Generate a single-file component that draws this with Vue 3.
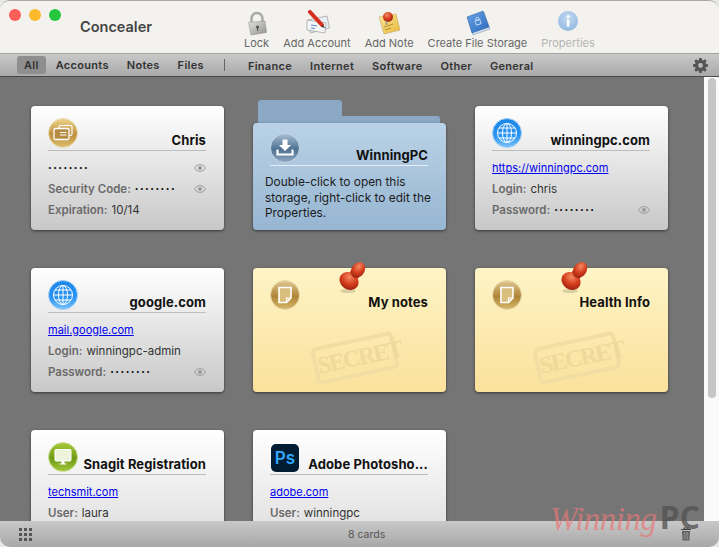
<script setup>
const tools = [
  { key: 'lock', label: 'Lock' },
  { key: 'account', label: 'Add Account' },
  { key: 'note', label: 'Add Note' },
  { key: 'storage', label: 'Create File Storage' },
  { key: 'info', label: 'Properties', off: true }
]

const leftTabs = ['All', 'Accounts', 'Notes', 'Files']
const rightTabs = ['Finance', 'Internet', 'Software', 'Other', 'General']

const dots = '••••••••'

const cards = [
  {
    kind: 'plain', icon: 'card', title: 'Chris',
    rows: [
      { value: dots, secret: true, eye: true },
      { label: 'Security Code:', value: dots, secret: true, eye: true },
      { label: 'Expiration:', value: '10/14' }
    ]
  },
  {
    kind: 'folder', icon: 'download', title: 'WinningPC',
    text: 'Double-click to open this storage, right-click to edit the Properties.'
  },
  {
    kind: 'plain', icon: 'globe', title: 'winningpc.com',
    rows: [
      { link: 'https://winningpc.com' },
      { label: 'Login:', value: 'chris' },
      { label: 'Password:', value: dots, secret: true, eye: true }
    ]
  },
  {
    kind: 'plain', icon: 'globe', title: 'google.com',
    rows: [
      { link: 'mail.google.com' },
      { label: 'Login:', value: 'winningpc-admin' },
      { label: 'Password:', value: dots, secret: true, eye: true }
    ]
  },
  { kind: 'sticky', icon: 'page', title: 'My notes' },
  { kind: 'sticky', icon: 'page', title: 'Health Info' },
  {
    kind: 'plain', icon: 'monitor', title: 'Snagit Registration',
    rows: [
      { link: 'techsmit.com' },
      { label: 'User:', value: 'laura' }
    ]
  },
  {
    kind: 'plain', icon: 'ps', title: 'Adobe Photosho...',
    rows: [
      { link: 'adobe.com' },
      { label: 'User:', value: 'winningpc' }
    ]
  }
]
</script>

<template>
  <div class="window">
    <svg class="defs" width="0" height="0">
      <defs>
        <linearGradient id="gold" x1="0" y1="0" x2="0" y2="1">
          <stop offset="0" stop-color="#efd48c" />
          <stop offset="0.55" stop-color="#bd8f3e" />
          <stop offset="1" stop-color="#e0c06e" />
        </linearGradient>
        <linearGradient id="bronze" x1="0" y1="0" x2="0" y2="1">
          <stop offset="0" stop-color="#e2c992" />
          <stop offset="0.55" stop-color="#ae8436" />
          <stop offset="1" stop-color="#d8b96c" />
        </linearGradient>
        <linearGradient id="slate" x1="0" y1="0" x2="0" y2="1">
          <stop offset="0" stop-color="#a9bfd4" />
          <stop offset="0.55" stop-color="#4d7193" />
          <stop offset="1" stop-color="#8fa9c3" />
        </linearGradient>
        <linearGradient id="sky" x1="0" y1="0" x2="0" y2="1">
          <stop offset="0" stop-color="#1b86ea" />
          <stop offset="0.6" stop-color="#2a94f2" />
          <stop offset="1" stop-color="#7cc3fa" />
        </linearGradient>
        <linearGradient id="leaf" x1="0" y1="0" x2="0" y2="1">
          <stop offset="0" stop-color="#a9cb3c" />
          <stop offset="0.55" stop-color="#6f9a14" />
          <stop offset="1" stop-color="#a4c83e" />
        </linearGradient>
        <linearGradient id="steel" x1="0" y1="0" x2="1" y2="1">
          <stop offset="0" stop-color="#e4e4e2" />
          <stop offset="1" stop-color="#8f8f8c" />
        </linearGradient>
        <radialGradient id="red" cx="0.4" cy="0.3" r="0.8">
          <stop offset="0" stop-color="#f48a62" />
          <stop offset="0.5" stop-color="#d63e1e" />
          <stop offset="1" stop-color="#8e1c0c" />
        </radialGradient>
        <linearGradient id="paper" x1="0" y1="0" x2="1" y2="1">
          <stop offset="0" stop-color="#fbe79a" />
          <stop offset="1" stop-color="#e9b93a" />
        </linearGradient>
        <linearGradient id="book" x1="0" y1="0" x2="1" y2="1">
          <stop offset="0" stop-color="#6aa6e6" />
          <stop offset="1" stop-color="#2a68bd" />
        </linearGradient>
        <radialGradient id="bubble" cx="0.5" cy="0.35" r="0.7">
          <stop offset="0" stop-color="#c4daf0" />
          <stop offset="1" stop-color="#8fb6e0" />
        </radialGradient>
      </defs>
    </svg>

    <header class="toolbar">
      <div class="lights">
        <span class="light red"></span>
        <span class="light yellow"></span>
        <span class="light green"></span>
      </div>
      <div class="app-title">Concealer</div>
      <div class="tools">
        <div v-for="t in tools" :key="t.key" class="tool" :class="{ off: t.off }">
          <svg class="tool-icon" viewBox="0 0 28 26" width="28" height="26">
            <g v-if="t.key === 'lock'">
              <path d="M8.500 12V8.500a5.500 5.500 0 0 1 11 0V12" fill="none" stroke="#a9a9a6" stroke-width="2.400" />
              <path d="M5.500 12.500 22 11l1.500 11.500L8 25z" fill="url(#steel)" stroke="#8a8a88" stroke-width="0.500" />
              <circle cx="14.500" cy="17" r="1.600" fill="#555" />
              <rect x="14" y="17" width="1.200" height="4" fill="#555" />
            </g>
            <g v-else-if="t.key === 'account'">
              <path d="M5 10 24 6l2.500 12-19 5z" fill="#e8eef4" stroke="#8e8e8e" stroke-width="0.600" />
              <path d="M4 10 23 13l-1 10-18-3z" fill="#f4f5f6" stroke="#8e8e8e" stroke-width="0.600" />
              <path d="M8 15l6 1M8 18l4 .6" stroke="#5c8cd0" stroke-width="1" />
              <path d="M7 2 19 15" stroke="#d62f1f" stroke-width="4" stroke-linecap="round" />
              <path d="M19.500 15l3 3-4-1z" fill="#333" />
            </g>
            <g v-else-if="t.key === 'note'">
              <path d="M4 7 21 4l4 16-16 4z" fill="url(#paper)" stroke="#b8a05a" stroke-width="0.500" />
              <path d="M9 17l9-3M10 20l6-2" stroke="#a8862c" stroke-width="0.900" />
              <circle cx="13" cy="7" r="5" fill="url(#red)" />
              <path d="M12 11l-1 4" stroke="#8a8a8a" stroke-width="1.200" />
            </g>
            <g v-else-if="t.key === 'storage'">
              <path d="M5 8 21 2l6 17-17 6z" fill="#d8e2ec" stroke="#6f8fb4" stroke-width="0.500" />
              <path d="M4 7 20 1l6 16-17 6z" fill="url(#book)" stroke="#2a5ca0" stroke-width="0.500" />
              <rect x="12.500" y="10" width="5" height="4.500" rx="0.700" transform="rotate(-20 15 12)" fill="none" stroke="#bcd8f4" stroke-width="1" />
              <circle cx="14.500" cy="9" r="1.700" fill="none" stroke="#bcd8f4" stroke-width="1" />
            </g>
            <g v-else>
              <circle cx="14" cy="11" r="10" fill="url(#bubble)" />
              <rect x="12.800" y="9.500" width="2.600" height="7" rx="0.400" fill="#fff" />
              <circle cx="14.100" cy="6.500" r="1.600" fill="#fff" />
            </g>
          </svg>
          <span class="tool-label">{{ t.label }}</span>
        </div>
      </div>
    </header>

    <nav class="tabbar">
      <span
        v-for="(tab, i) in leftTabs"
        :key="tab"
        class="tab"
        :class="{ active: i === 0 }"
      >{{ tab }}</span>
      <span class="sep"></span>
      <span v-for="tab in rightTabs" :key="tab" class="tab group">{{ tab }}</span>
      <svg class="gear" viewBox="0 0 16 16" width="15" height="15">
        <path
          fill="#555"
          fill-rule="evenodd"
          d="M6.700 0h2.600l.4 2.200 1.200.5L12.800 1.400l1.800 1.800-1.300 1.900.5 1.200 2.200.4v2.600l-2.200.4-.5 1.200 1.300 1.900-1.800 1.800-1.900-1.300-1.200.5-.4 2.200H6.700l-.4-2.200-1.200-.5-1.900 1.300-1.800-1.800 1.300-1.900-.5-1.200L0 9.300V6.700l2.200-.4.500-1.200-1.300-1.900 1.800-1.800 1.900 1.300 1.200-.5zM8 5.400a2.600 2.600 0 1 0 0 5.200 2.600 2.600 0 0 0 0-5.200z"
        />
      </svg>
    </nav>

    <main class="content">
      <div class="cards">
        <article v-for="c in cards" :key="c.title" class="card" :class="c.kind">
          <div class="head">
            <svg v-if="c.icon !== 'ps'" class="badge" viewBox="0 0 30 30" width="30" height="30">
              <g v-if="c.icon === 'card'">
                <circle cx="15" cy="15" r="14.500" fill="url(#gold)" stroke="#e9dcb8" />
                <rect x="11" y="7.500" width="13" height="10" rx="1.500" fill="none" stroke="#fff" stroke-width="1.200" />
                <rect x="6" y="10.500" width="15" height="11" rx="1.500" fill="#b68c44" stroke="#fff" stroke-width="1.300" />
                <path d="M12 14.500h6.500M12 17h6.500" stroke="#fff" stroke-width="1" />
              </g>
              <g v-else-if="c.icon === 'download'">
                <circle cx="15" cy="15" r="14.500" fill="url(#slate)" stroke="#c6d6e4" />
                <path d="M12.500 6.500h5V12h3.500L15 18l-6-6h3.500z" fill="#fff" />
                <path d="M7.500 16.500v5h15v-5" fill="none" stroke="#fff" stroke-width="2.200" />
              </g>
              <g v-else-if="c.icon === 'globe'">
                <circle cx="15" cy="15" r="14.500" fill="url(#sky)" stroke="#a6d2f6" />
                <g fill="none" stroke="#fff" stroke-width="1">
                  <circle cx="15" cy="15" r="9.500" />
                  <ellipse cx="15" cy="15" rx="4.500" ry="9.500" />
                  <path d="M15 5.500v19M5.500 15h19M7 10h16M7 20h16" />
                </g>
              </g>
              <g v-else-if="c.icon === 'page'">
                <circle cx="15" cy="15" r="14.500" fill="url(#bronze)" stroke="#ead9ae" />
                <path d="M9 7.500h12v10.500l-4.500 4.500H9z" fill="#d9bd7c" stroke="#fff" stroke-width="1.600" />
                <path d="M21 18h-4.500v4.500" fill="none" stroke="#fff" stroke-width="1.200" />
              </g>
              <g v-else>
                <circle cx="15" cy="15" r="14.500" fill="url(#leaf)" stroke="#cfe09a" />
                <rect x="7" y="7.500" width="16" height="11.500" rx="1" fill="#eef4dc" stroke="#fff" />
                <path d="M13.500 19h3v2.500h2v1h-7v-1h2z" fill="#fff" />
              </g>
            </svg>
            <span v-else class="ps-logo">Ps</span>
            <h2 class="title">{{ c.title }}</h2>
          </div>

          <p v-if="c.text" class="desc">{{ c.text }}</p>

          <div v-for="(r, i) in c.rows" :key="i" class="row">
            <a v-if="r.link" class="link" href="#">{{ r.link }}</a>
            <template v-else>
              <span v-if="r.label" class="label">{{ r.label }}</span>
              <span class="value" :class="{ secret: r.secret }">{{ r.value }}</span>
              <svg v-if="r.eye" class="eye" viewBox="0 0 12 8" width="12" height="8">
                <path d="M.5 4C2 1.600 4 .6 6 .6S10 1.600 11.500 4C10 6.400 8 7.400 6 7.400S2 6.400.5 4z" fill="none" stroke="#9a9a9a" />
                <circle cx="6" cy="4" r="2" fill="#9a9a9a" />
              </svg>
            </template>
          </div>

          <template v-if="c.kind === 'sticky'">
            <svg class="pin" viewBox="0 0 28 32" width="28" height="32">
              <ellipse cx="10" cy="30" rx="8" ry="2" fill="#000" opacity="0.14" />
              <path d="M14 8 23 13 15 24 8 17z" fill="#b52c14" />
              <ellipse cx="11" cy="20" rx="10" ry="8.500" transform="rotate(35 11 20)" fill="url(#red)" />
              <ellipse cx="20" cy="9" rx="6.500" ry="8.500" transform="rotate(35 20 9)" fill="url(#red)" />
            </svg>
            <div class="stamp">SECRET</div>
          </template>
        </article>
      </div>
      <div class="scrollbar"><div class="thumb"></div></div>
    </main>

    <footer class="statusbar">
      <svg class="grip" viewBox="0 0 14 13" width="14" height="13">
        <g fill="#555">
          <rect x="0" y="0" width="3" height="3" /><rect x="5" y="0" width="3" height="3" /><rect x="10" y="0" width="3" height="3" />
          <rect x="0" y="5" width="3" height="3" /><rect x="5" y="5" width="3" height="3" /><rect x="10" y="5" width="3" height="3" />
          <rect x="0" y="10" width="3" height="3" /><rect x="5" y="10" width="3" height="3" /><rect x="10" y="10" width="3" height="3" />
        </g>
      </svg>
      <span class="count">8 cards</span>
      <svg class="trash" viewBox="0 0 12 14" width="12" height="14">
        <path d="M1 2.500h10M4 2.500V1h4v1.500" fill="none" stroke="#444" stroke-width="1.200" />
        <path d="M2 4h8l-.7 9.500H2.700z" fill="#5a5a5a" />
        <path d="M4.200 5v7.500M6 5v7.500M7.800 5v7.500" stroke="#b0b0b0" stroke-width="0.700" />
      </svg>
    </footer>

    <div class="watermark">
      <span class="wm-script">Winning</span><span class="wm-pc">PC</span>
    </div>
  </div>
</template>

<style scoped>
.window {
  position: relative;
  display: flex;
  flex-direction: column;
  height: 547px;
  overflow: hidden;
  border-radius: 10px;
  border-top: 1px solid #a8a8a8;
  box-sizing: border-box;
  font-family: Inter, "Liberation Sans", sans-serif;
}
.defs {
  position: absolute;
}
.toolbar {
  display: flex;
  flex: none;
  height: 52px;
  background: #f3f2ee;
  border-bottom: 1px solid #a4a4a4;
}
.lights {
  display: flex;
  gap: 8px;
  padding: 8px 0 0 9px;
}
.light {
  width: 12px;
  height: 12px;
  border-radius: 50%;
}
.red { background: #fb5f58; }
.yellow { background: #fdb92c; }
.green { background: #27c63f; }
.app-title {
  margin: 17px 0 0 19px;
  width: 164px;
  font-size: 14.500px;
  font-weight: 600;
  color: #444;
}
.tools {
  display: flex;
  gap: 14px;
}
.tool {
  display: flex;
  flex-direction: column;
  align-items: center;
  padding-top: 9px;
}
.tool-icon {
  height: 26px;
  margin: 0 -2px;
}
.tool-label {
  margin-top: 1px;
  font-size: 11px;
  line-height: 13px;
  color: #666;
  white-space: nowrap;
}
.tool.off .tool-label {
  color: #b5b5b5;
}
.tabbar {
  display: flex;
  flex: none;
  align-items: center;
  height: 23px;
  box-sizing: border-box;
  padding-left: 17px;
  background: linear-gradient(#c9c9c9, #a9a9a9);
  border-bottom: 1px solid #484848;
}
.tab {
  margin-right: 18px;
  font-size: 11px;
  font-weight: 600;
  letter-spacing: 0.300px;
  color: #333;
  white-space: nowrap;
}
.tab.active {
  margin-right: 10px;
  padding: 2px 7px;
  border-radius: 3px;
  background: #8e8e8e;
}
.tab.group {
  position: relative;
  top: 1px;
}
.sep {
  width: 1px;
  height: 12px;
  margin: 0 23px 0 2px;
  background: #666;
}
.gear {
  margin-left: auto;
  margin-right: 11px;
}
.content {
  display: flex;
  flex: 1;
  min-height: 0;
  background: #757575;
}
.cards {
  position: relative;
  z-index: 0;
  display: grid;
  flex: 1;
  grid-template-columns: repeat(3, 193px);
  grid-auto-rows: 124px;
  column-gap: 29px;
  row-gap: 38px;
  padding: 29px 0 0 31px;
  overflow: hidden;
}
.card {
  position: relative;
  box-sizing: border-box;
  padding: 12px 18px 0 17px;
  border-radius: 4px;
  box-shadow: 0 1px 3px rgba(0, 0, 0, 0.55);
  background: linear-gradient(#ffffff, #c8c8c8);
}
.card.plain:nth-child(n + 7) {
  background: linear-gradient(#ffffff, #e4e4e4 90px);
}
.head {
  display: flex;
  align-items: flex-end;
  justify-content: space-between;
  height: 32px;
  border-bottom: 1px solid #bdbdbd;
}
.badge,
.ps-logo {
  flex: none;
  margin-bottom: 2px;
}
.ps-logo {
  width: 28px;
  height: 28px;
  margin-left: 1px;
  border-radius: 5px;
  background: #011d33;
  color: #31a8ff;
  font-size: 17px;
  font-weight: 600;
  line-height: 28px;
  text-align: center;
}
.title {
  margin: 0 0 2px;
  font-size: 13px;
  font-weight: 700;
  letter-spacing: 0.100px;
  line-height: 16px;
  color: #111;
  white-space: nowrap;
}
.row {
  display: flex;
  align-items: center;
  gap: 4px;
  height: 21px;
  font-size: 11.500px;
}
.head + .row {
  margin-top: 6px;
}
.label {
  font-weight: 600;
  color: #6a6a6a;
}
.value {
  color: #333;
}
.value.secret {
  font-size: 6.500px;
  letter-spacing: 1.500px;
  color: #111;
}
.link {
  font-size: 11px;
  color: #0000ee;
  text-decoration: underline;
}
.eye {
  margin-left: auto;
}
.card.folder {
  align-self: end;
  height: 107px;
  padding-top: 10px;
  background: linear-gradient(#bad2e6, #97b6d2);
}
.card.folder::before {
  content: "";
  position: absolute;
  z-index: -1;
  top: -23px;
  left: 5px;
  width: 84px;
  height: 30px;
  border-radius: 3px 3px 0 0;
  background: #8ba9c5;
}
.card.folder::after {
  content: "";
  position: absolute;
  z-index: -1;
  top: -7px;
  left: 5px;
  width: 182px;
  height: 14px;
  border-radius: 3px 3px 0 0;
  background: #8ba9c5;
}
.folder .head {
  border-bottom-color: #e6eff6;
}
.desc {
  margin: 8px -10px 0 -5px;
  font-size: 11.900px;
  line-height: 15.500px;
  color: #1c1c1c;
}
.card.sticky {
  background: linear-gradient(#fef4c6, #fbe19c);
}
.sticky .head {
  border-bottom: 0;
}
.pin {
  position: absolute;
  top: -7px;
  left: 85px;
}
.stamp {
  position: absolute;
  top: 71px;
  left: 60px;
  width: 76px;
  height: 30px;
  border: 4px solid #f2dda2;
  border-radius: 6px;
  transform: rotate(-12deg);
  font-family: "Liberation Serif", serif;
  font-size: 24px;
  font-weight: 700;
  letter-spacing: -1.800px;
  line-height: 30px;
  text-align: center;
  color: #efd99b;
}
.scrollbar {
  flex: none;
  width: 15px;
  background: #fafafa;
}
.thumb {
  width: 8px;
  height: 320px;
  margin: 1px 0 0 4px;
  border-radius: 4px;
  background: #c6c6c6;
}
.statusbar {
  display: flex;
  flex: none;
  align-items: center;
  height: 26px;
  padding: 0 27px 0 19px;
  background: linear-gradient(#c8c8c8, #a8a8a8);
}
.count {
  margin-left: 315px;
  font-size: 10.500px;
  color: #555;
}
.trash {
  margin-left: auto;
}
.watermark {
  position: absolute;
  top: 498px;
  left: 550px;
  display: flex;
  align-items: flex-start;
  pointer-events: none;
}
.wm-script {
  font-family: "Liberation Serif", serif;
  font-size: 33px;
  font-style: italic;
  line-height: 40px;
  letter-spacing: -0.500px;
  color: rgba(232, 120, 120, 0.7);
}
.wm-pc {
  margin-left: 3px;
  font-family: "Open Sans", sans-serif;
  font-size: 32px;
  font-weight: 700;
  line-height: 36px;
  color: rgba(80, 80, 80, 0.75);
}
</style>

<style>
html, body {
  margin: 0;
  height: 100%;
  overflow: hidden;
  background: #e8e8e8;
}
</style>
